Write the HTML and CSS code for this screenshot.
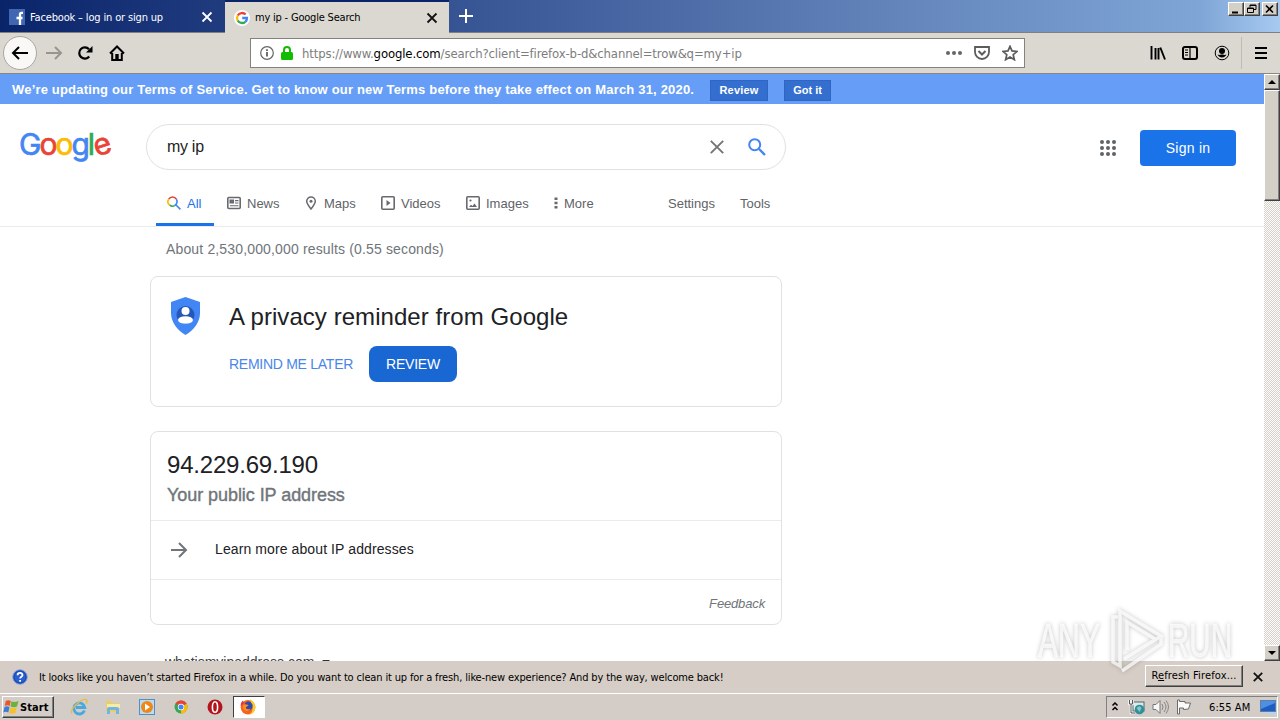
FILE: index.html
```html
<!DOCTYPE html>
<html lang="en">
<head>
    <meta charset="UTF-8">
    <meta name="viewport" content="width=device-width, initial-scale=1.0">
    <title>my ip - Google Search</title>
    <link rel="stylesheet" href="styles.css">
</head>
<body>

    <div class="titlebar">
        <div class="tab">
            <svg class="favicon" width="16" height="16" viewBox="0 0 16 16"><rect width="16" height="16" fill="#4267b2"/><path d="M14 3.800h-1.500c-1 0-1.500.5-1.500 1.500V16M7.500 9h6" fill="none" stroke="#fff" stroke-width="2.300"/></svg>
            <span class="tab-title fb-title">Facebook – log in or sign up</span>
            <svg width="12" height="12" viewBox="0 0 12 12"><path d="M1.500 1.500l9 9m0-9l-9 9" stroke="#fff" stroke-width="1.800"/></svg>
        </div>
        <div class="tab active">
            <svg class="favicon" width="16" height="16" viewBox="0 0 16 16"><circle cx="8" cy="8" r="8" fill="#fff"/><g fill="none" stroke-width="2.300"><path d="M3.700 5.500A5 5 0 0 1 11.600 4.500" stroke="#ea4335"/><path d="M3.700 5.500a5 5 0 0 0 0 5" stroke="#fbbc05"/><path d="M3.700 10.500a5 5 0 0 0 7.600 1.300" stroke="#34a853"/><path d="M11.300 11.800A5 5 0 0 0 13 8H8.200" stroke="#4285f4"/></g></svg>
            <span class="tab-title">my ip - Google Search</span>
            <svg width="12" height="12" viewBox="0 0 12 12"><path d="M1.500 1.500l9 9m0-9l-9 9" stroke="#111" stroke-width="1.800"/></svg>
        </div>
        <svg class="new-tab" width="14" height="14" viewBox="0 0 14 14"><path d="M7 0v14M0 7h14" stroke="#fff" stroke-width="2"/></svg>
        <div class="window-buttons">
            <div class="win-btn"><svg width="12" height="11" viewBox="0 0 12 11"><path d="M3 9.500h6" stroke="#000" stroke-width="2"/></svg></div>
            <div class="win-btn"><svg width="12" height="11" viewBox="0 0 12 11"><path d="M5 4.500V2h6v4.500H9M5 2.500h6M2.500 5h6v4.500h-6zM2.500 5.500h6" fill="none" stroke="#000"/></svg></div>
            <div class="win-btn close-btn"><svg width="12" height="11" viewBox="0 0 12 11"><path d="M3 2.500l7 7m0-7l-7 7" stroke="#000" stroke-width="1.600"/></svg></div>
        </div>
    </div>

    <div class="navbar">
        <div class="back"><svg width="18" height="16" viewBox="0 0 18 16"><path d="M17 8H2M8 2L2 8l6 6" fill="none" stroke="#000" stroke-width="2"/></svg></div>
        <svg class="forward" width="18" height="16" viewBox="0 0 18 16"><path d="M1 8h15M10 2l6 6-6 6" fill="none" stroke="#98958f" stroke-width="2"/></svg>
        <svg class="reload" width="16" height="16" viewBox="0 0 16 16"><path d="M12.200 11.500A5.600 5.600 0 1 1 12 4.200" fill="none" stroke="#000" stroke-width="2.200"/><path d="M15.500 1v6.500H9z"/></svg>
        <svg class="home" width="16" height="16" viewBox="0 0 16 16"><path d="M1 8.500L8 1.500l7 7M3.200 8v7h9.600V8" fill="none" stroke="#000" stroke-width="2"/><path d="M6.300 15V9h3.400v6z"/></svg>
        <div class="urlbar">
            <svg width="14" height="14" viewBox="0 0 14 14"><circle cx="7" cy="7" r="6.300" fill="none" stroke="#666" stroke-width="1.200"/><path d="M7 6v4.500M7 3.200v1.700" stroke="#555" stroke-width="1.700"/></svg>
            <svg class="lock" width="12" height="14" viewBox="0 0 12 14"><path d="M3 7V4a3 3 0 0 1 6 0v3" fill="none" stroke="#12bc00" stroke-width="2"/><rect y="6" width="12" height="8" rx="1.500" fill="#12bc00"/></svg>
            <span class="url">https://www.<b>google.com</b>/search?client=firefox-b-d&amp;channel=trow&amp;q=my+ip</span>
            <svg class="dots" width="16" height="16" viewBox="0 0 16 16" fill="#666"><circle cx="2" cy="8" r="2"/><circle cx="8" cy="8" r="2"/><circle cx="14" cy="8" r="2"/></svg>
            <svg class="pocket" width="16" height="16" viewBox="0 0 16 16" fill="none" stroke="#5c5c5c" stroke-width="1.800"><path d="M1 2h14v5a7 7 0 0 1-14 0z"/><path d="M4.500 6L8 9.500 11.500 6" stroke-width="2"/></svg>
            <svg width="16" height="16" viewBox="0 0 16 16"><path d="M8 1.300l2 4.600 5 .5-3.800 3.300 1.200 5L8 12.100l-4.400 2.600 1.200-5L1 6.400l5-.5z" fill="none" stroke="#5c5c5c" stroke-width="1.700"/></svg>
        </div>
        <div class="toolbar-icons">
            <svg width="16" height="16" viewBox="0 0 16 16"><path d="M1.500 1v13.500M5.500 3v11.500M8.500 3v11.500M10.300 2.500l4.700 12" stroke="#000" stroke-width="1.900"/></svg>
            <svg width="16" height="16" viewBox="0 0 16 16"><rect x="1" y="2" width="14" height="12" rx="2" fill="none" stroke="#000" stroke-width="2"/><path d="M8 2v12M3 5h3M3 7.500h3M3 10h3" stroke="#000" stroke-width="1.200"/></svg>
            <svg width="16" height="16" viewBox="0 0 16 16"><circle cx="8" cy="8" r="6.800" fill="none" stroke="#000" stroke-width="1"/><circle cx="8" cy="6" r="3"/><path d="M3.500 9.800c1.500 0 2.500.3 3.500-.3h2c1 .6 2 .3 3.500.3a5.200 5.200 0 0 1-9 0z"/></svg>
        </div>
        <div class="menu-sep"></div>
        <svg width="12" height="12" viewBox="0 0 12 12"><path d="M0 1h12M0 6h12M0 11h12" stroke="#000" stroke-width="2"/></svg>
    </div>

    <div class="viewport">
        <div class="page">
            <div class="banner">
                <span class="banner-text">We’re updating our Terms of Service. Get to know our new Terms before they take effect on March 31, 2020.</span>
                <span class="banner-btn review-terms">Review</span>
                <span class="banner-btn got-it">Got it</span>
            </div>

            <div class="header">
                <div class="logo"><span class="b">G</span><span class="r">o</span><span class="y">o</span><span class="b">g</span><span class="g">l</span><span class="r tilt">e</span></div>
                <div class="search-box">
                    <span class="query">my ip</span>
                    <svg class="clear" width="14" height="14" viewBox="0 0 14 14"><path d="M.8.800l12.400 12.400m0-12.400L.8 13.200" stroke="#757575" stroke-width="1.900"/></svg>
                    <svg width="18" height="18" viewBox="0 0 18 18" fill="none" stroke="#4285f4" stroke-width="2"><circle cx="6.700" cy="6.700" r="5.500"/><path d="M10.800 10.800l6.200 6.200" stroke-width="2.300"/></svg>
                </div>
                <svg class="apps" width="16" height="16" viewBox="0 0 16 16" fill="#5f6368"><circle cx="2" cy="2" r="2"/><circle cx="8" cy="2" r="2"/><circle cx="14" cy="2" r="2"/><circle cx="2" cy="8" r="2"/><circle cx="8" cy="8" r="2"/><circle cx="14" cy="8" r="2"/><circle cx="2" cy="14" r="2"/><circle cx="8" cy="14" r="2"/><circle cx="14" cy="14" r="2"/></svg>
                <div class="sign-in">Sign in</div>
            </div>

            <div class="search-tabs">
                <div class="stab all">
                    <svg width="14" height="14" viewBox="0 0 14 14" fill="none" stroke-width="1.600"><path d="M1.700 3.200a4.500 4.500 0 0 1 7.700 0" stroke="#ea4335"/><path d="M1.700 3.200a4.500 4.500 0 0 0 1 6" stroke="#fbbc05"/><path d="M2.700 9.200a4.500 4.500 0 0 0 5 .3" stroke="#34a853"/><path d="M9.400 3.200a4.500 4.500 0 0 1-1.700 6.300M8.800 8.800l4.600 4.600" stroke="#4285f4"/></svg>
                    <span>All</span>
                </div>
                <div class="stab news">
                    <svg width="14" height="14" viewBox="0 0 14 14"><rect x=".8" y="1.500" width="12.400" height="11" rx="1" fill="none" stroke="#666a6e" stroke-width="1.600"/><path d="M3 4h3.500v3H3zM8 4.600h3.500M8 7h3.500M3 9.700h8.500" fill="#666a6e" stroke="#666a6e" stroke-width="1.100"/></svg>
                    <span>News</span>
                </div>
                <div class="stab maps">
                    <svg width="12" height="14" viewBox="0 0 12 14"><path d="M6 13C3.500 9.800 1.700 7.500 1.700 5.200a4.300 4.300 0 0 1 8.600 0C10.300 7.500 8.500 9.800 6 13z" fill="none" stroke="#666a6e" stroke-width="1.500"/><circle cx="6" cy="5.200" r="1.500" fill="#666a6e"/></svg>
                    <span>Maps</span>
                </div>
                <div class="stab videos">
                    <svg width="14" height="14" viewBox="0 0 14 14"><rect x=".8" y=".8" width="12.400" height="12.400" rx="1" fill="none" stroke="#666a6e" stroke-width="1.600"/><path d="M5.500 4v6l4-3z" fill="#666a6e"/></svg>
                    <span>Videos</span>
                </div>
                <div class="stab images">
                    <svg width="14" height="14" viewBox="0 0 14 14"><rect x=".8" y=".8" width="12.400" height="12.400" rx="1" fill="none" stroke="#666a6e" stroke-width="1.600"/><path d="M3 11l2-2.300 1.500 1.300 2-2.500L11 11z" fill="#666a6e"/><circle cx="4.500" cy="4.500" r="1.100" fill="#666a6e"/></svg>
                    <span>Images</span>
                </div>
                <div class="stab more">
                    <svg width="4" height="12" viewBox="0 0 4 12" fill="#666a6e"><path d="M.5.500h3v2.500h-3zM.5 4.700h3v2.500h-3zM.5 9h3v2.500h-3z"/></svg>
                    <span>More</span>
                </div>
                <div class="stab settings">Settings</div>
                <div class="stab">Tools</div>
            </div>

            <div class="results">
                <div class="stats">About 2,530,000,000 results (0.55 seconds)</div>

                <div class="card privacy">
                    <svg width="32" height="38" viewBox="0 0 32 38"><path d="M16.500 0l14.500 5v11c0 9-6 17-14.500 22C8 33 2 25 2 16V5z" fill="#4285f4"/><circle cx="16.500" cy="18" r="9" fill="#2457b8"/><circle cx="16.500" cy="14" r="4" fill="#fff"/><ellipse cx="16.500" cy="23" rx="7.500" ry="3.800" fill="#fff"/></svg>
                    <div class="privacy-body">
                        <div class="privacy-title">A privacy reminder from Google</div>
                        <div class="privacy-actions">
                            <span class="remind">REMIND ME LATER</span>
                            <span class="review">REVIEW</span>
                        </div>
                    </div>
                </div>

                <div class="card ip-card">
                    <div class="ip-main">
                        <div class="ip">94.229.69.190</div>
                        <div class="ip-label">Your public IP address</div>
                    </div>
                    <div class="learn">
                        <svg width="18" height="16" viewBox="0 0 18 16"><path d="M1 8h15M9 1l7 7-7 7" fill="none" stroke="#70757a" stroke-width="2"/></svg>
                        <span>Learn more about IP addresses</span>
                    </div>
                    <div class="feedback">Feedback</div>
                </div>

                <div class="result-url">whatismyipaddress.com <i class="caret"></i></div>
            </div>
        </div>

        <div class="scrollbar">
            <div class="scroll-btn"><svg width="8" height="4" viewBox="0 0 8 4"><path d="M0 4l4-4 4 4z"/></svg></div>
            <div class="thumb"></div>
            <div class="track"></div>
            <div class="scroll-btn"><svg width="8" height="4" viewBox="0 0 8 4"><path d="M0 0l4 4 4-4z"/></svg></div>
        </div>
    </div>

    <div class="notification">
        <svg width="16" height="16" viewBox="0 0 16 16"><circle cx="8" cy="8" r="7.300" fill="#2a5fd0" stroke="#8aa4d8"/><circle cx="8" cy="8" r="6" fill="none" stroke="#1c46a8"/><path d="M5.600 6.300c0-3.200 4.900-3 4.900-.3 0 1.700-2.400 1.700-2.400 3.500M8.100 11v1.800" fill="none" stroke="#fff" stroke-width="1.800"/></svg>
        <span class="notification-text">It looks like you haven’t started Firefox in a while. Do you want to clean it up for a fresh, like-new experience? And by the way, welcome back!</span>
        <div class="refresh">R<u>e</u>fresh Firefox...</div>
        <svg class="dismiss" width="10" height="10" viewBox="0 0 10 10"><path d="M.8.800l8.400 8.400m0-8.400L.8 9.200" stroke="#111" stroke-width="1.800"/></svg>
    </div>

    <div class="taskbar">
        <div class="start">
            <svg width="16" height="14" viewBox="0 0 16 14"><path d="M2.800 1q2.500-1.500 5 0L6.700 6q-2.500-1.300-5 0z" fill="#e8562a"/><path d="M8.500 1.300q2.700 1.400 7-.3L14 6.500q-2.900 1.300-6.500 0z" fill="#6ab23c"/><path d="M1.500 7q2.500-1.300 5 0l-1.200 5.500q-2.400-1.400-5 0z" fill="#3c7bd8"/><path d="M7.300 7.500q2.900 1.300 6.500 0L12.400 13q-2.900 1.400-6.300 0z" fill="#f5c02c"/></svg>
            <span>Start</span>
        </div>
        <div class="quick-launch">
            <svg width="18" height="18" viewBox="0 0 18 18" fill="none"><path d="M14.500 12.500a5.500 5.500 0 1 1 .3-3H6" stroke="#4aa8e0" stroke-width="2.800"/><path d="M2 15.500C-1 11 13-1 16.500 2c1 1 .3 2.500-.5 3.500" stroke="#e5bd45" stroke-width="1.400"/></svg>
            <svg width="18" height="18" viewBox="0 0 18 18"><path d="M2 3h5l1 2h7v9H2z" fill="#e8cd6c"/><path d="M3 6h13v4H3z" fill="#f8eba8"/><path d="M3 16v-5q0-2 2-2h8q2 0 2 2v5h-3v-4H6v4z" fill="#72b5dd"/></svg>
            <svg width="18" height="18" viewBox="0 0 18 18"><rect x="1.500" y="1.500" width="15" height="15" fill="#b9dcf3" stroke="#518fc4"/><circle cx="9" cy="9" r="6" fill="#ee8618"/><path d="M7 5.500v7l5-3.500z" fill="#fff"/></svg>
            <svg width="18" height="18" viewBox="0 0 18 18"><circle cx="9" cy="9" r="6.500" fill="#34a853"/><path d="M9 9L3.300 5.800A6.500 6.500 0 0 1 14.700 5.800z" fill="#ea4335"/><path d="M9 9l5.700-3.200A6.500 6.500 0 0 1 9 15.500z" fill="#fbbc05"/><circle cx="9" cy="9" r="3.200" fill="#fff"/><circle cx="9" cy="9" r="2.500" fill="#4285f4"/></svg>
            <svg width="18" height="18" viewBox="0 0 18 18"><circle cx="9" cy="9" r="7.500" fill="#b3151c"/><ellipse cx="9" cy="9" rx="2.600" ry="5.300" fill="#b3151c" stroke="#fff" stroke-width="1.600"/></svg>
        </div>
        <div class="running">
            <svg width="18" height="18" viewBox="0 0 18 18"><circle cx="9" cy="9.300" r="7.300" fill="#f5631f"/><path d="M11 1.500c4 1.500 6.500 6 4.800 10.500-1 2.400-3 4-5.300 4.600 3-3 3.500-5 2.500-8z" fill="#ffc928"/><path d="M1.700 8C1.500 5 3 3.500 4 2.500L5 5z" fill="#e92c4c"/><circle cx="9.300" cy="8" r="4.400" fill="#2d4cb0"/><path d="M4 7c2-1.500 3-.5 5.500 0-1 2-3 1.500-2.500 3s3 1.500 4.500.5C10 14 5 13.500 4 10z" fill="#ff8a1e"/></svg>
        </div>
        <div class="tray">
            <svg class="chevrons" width="8" height="10" viewBox="0 0 8 10"><path d="M1.500 3.500L4 1l2.500 2.500M1.500 8L4 5.500 6.500 8" fill="none" stroke="#000" stroke-width="1.500"/></svg>
            <svg class="network" width="18" height="16" viewBox="0 0 18 16"><rect x="5" y="3" width="11" height="9" fill="#dceaea" stroke="#53676a"/><path d="M1.500 1v4h3V1M3 5v9h4" fill="none" stroke="#fff" stroke-width="2.400"/><path d="M1.500 1v4h3V1M3 5v9h4" fill="none" stroke="#555"/><circle cx="11.500" cy="10.500" r="4.800" fill="#328f9d"/><path d="M8.500 9l3-2 2 2-2 4z" fill="#85cbbb"/></svg>
            <svg class="volume" width="17" height="16" viewBox="0 0 17 16"><path d="M1 5.500h3L8 1.500v13l-4-4H1z" fill="#f8f8f8" stroke="#777"/><path d="M10 5q2 3 0 6M12 3q4 5 0 10M14 1.500q5 6.500 0 13" fill="none" stroke="#878787"/></svg>
            <svg class="flag" width="16" height="16" viewBox="0 0 16 16"><path d="M1.500 1v14h2V9h4v1.500l5-.5 2-6H9V2.500H3.500V1z" fill="#fafafa" stroke="#6b6b6b"/></svg>
            <span class="clock">6:55 AM</span>
            <svg width="17" height="14" viewBox="0 0 17 14"><rect x=".5" y=".5" width="15" height="11" fill="#1d5dc1" stroke="#5b7fa8"/><path d="M1 1h14v2L1 9z" fill="#4e8fe4"/><path d="M7 13h9" stroke="#b8d2ef" stroke-width="2"/></svg>
        </div>
    </div>

    <!-- sandbox watermark -->
    <svg class="watermark" width="220" height="80" viewBox="0 0 220 80">
        <text x="8" y="57" textLength="62" lengthAdjust="spacingAndGlyphs">ANY</text>
        <path d="M88 17h-5v45l7 4V11l41 25-37 23M97 50V22l28 17M92 71l39-27V36"/>
        <text x="138" y="57" textLength="64" lengthAdjust="spacingAndGlyphs">RUN</text>
    </svg>

</body>
</html>
```
FILE: styles.css
```css
* {
    box-sizing: border-box;
}
body {
    margin: 0;
    width: 1280px;
    height: 720px;
    overflow: hidden;
    display: flex;
    flex-direction: column;
    font-family: "Liberation Sans", Arial, sans-serif;
    background: #fff;
}
svg {
    display: block;
    flex: none;
}
span, div {
    white-space: nowrap;
}

/* window chrome */
.titlebar, .navbar, .notification, .taskbar {
    font-family: "DejaVu Sans Condensed", "DejaVu Sans", Tahoma, sans-serif;
    font-size: 11px;
    color: #000;
    flex: none;
}
.titlebar {
    height: 33px;
    display: flex;
    background: linear-gradient(to right, #0a246a 0, #3b5897 500px, #6587bd 920px, #7fa5d6 1200px, #a6caf0 1280px);
    border-bottom: 1px solid #808080;
}
.tab {
    width: 225px;
    height: 32px;
    display: flex;
    align-items: center;
    padding: 2px 12px 0 9px;
    color: #fff;
}
.tab.active {
    width: 224px;
    height: 33px;
    background: #dbd8d1;
    color: #000;
    border-top: 2px solid #0a246a;
    padding: 0 11px 0 9px;
}
.favicon {
    margin-right: 5px;
}
.tab-title {
    flex: 1;
    letter-spacing: -0.2px;
}
.fb-title {
    letter-spacing: -0.16px;
}
.new-tab {
    margin: 9px 0 0 10px;
}
.window-buttons {
    display: flex;
    margin: 2px 2px 0 auto;
}
.win-btn {
    width: 16px;
    height: 14px;
    background: #d4d0c8;
    border: 1px solid;
    border-color: #fff #404040 #404040 #fff;
    box-shadow: inset -1px -1px 0 #808080;
}
.close-btn {
    margin-left: 2px;
}
.navbar {
    height: 41px;
    display: flex;
    align-items: center;
    padding: 0 13px 0 3px;
    background: #dbd8d1;
    border-bottom: 1px solid #8a8782;
}
.back {
    width: 34px;
    height: 34px;
    border: 1px solid #aaa7a2;
    border-radius: 50%;
    background: #f9f8f7;
    display: flex;
    align-items: center;
    justify-content: center;
}
.forward {
    margin-left: 8px;
}
.reload {
    margin-left: 14px;
}
.home {
    margin-left: 16px;
}
.urlbar {
    width: 775px;
    height: 30px;
    margin-left: 125px;
    padding: 0 6px 0 9px;
    background: #fff;
    border: 1px solid #85827d;
    display: flex;
    align-items: center;
}
.lock {
    margin-left: 7px;
}
.url {
    margin-left: 9px;
    flex: 1;
    font-size: 13px;
    color: #7d7d7d;
    letter-spacing: -0.13px;
}
.url b {
    font-weight: normal;
    color: #000;
}
.pocket {
    margin: 0 12px;
}
.toolbar-icons {
    display: flex;
    gap: 16px;
    margin-left: auto;
}
.menu-sep {
    width: 1px;
    height: 32px;
    margin: 0 13px 0 11px;
    background: #bfbcb6;
}

/* page */
.viewport {
    height: 587px;
    display: flex;
    flex: none;
    overflow: hidden;
}
.page {
    width: 1264px;
    overflow: hidden;
}
.banner {
    height: 30px;
    background: #669df6;
    color: #fff;
    font-size: 13px;
    font-weight: bold;
    display: flex;
    align-items: center;
    padding: 1px 0 0 12px;
}
.banner-text {
    width: 698px;
    letter-spacing: 0.18px;
}
.banner-btn {
    height: 21px;
    line-height: 19px;
    margin-top: 1px;
    font-size: 11px;
    text-align: center;
    background: #346fd0;
    border: 1px solid #2f66c2;
}
.review-terms {
    width: 58px;
    letter-spacing: 0.2px;
}
.got-it {
    width: 47px;
    margin-left: 16px;
}
.header {
    display: flex;
    align-items: center;
    height: 66px;
    padding: 20px 28px 0 19px;
}
.logo {
    width: 127px;
    margin-top: -6px;
    font-family: Inter, sans-serif;
    font-size: 30px;
    letter-spacing: -2px;
    line-height: 40px;
    -webkit-text-stroke: 0.7px;
}
.b { color: #4285f4; }
.r { color: #ea4335; }
.y { color: #fbbc05; }
.g { color: #34a853; }
.tilt {
    display: inline-block;
    transform: rotate(-18deg);
}
.search-box {
    width: 640px;
    height: 46px;
    border: 1px solid #dfe1e5;
    border-radius: 23px;
    display: flex;
    align-items: center;
    padding: 0 19px 0 20px;
    font-size: 16px;
    color: #222;
}
.query {
    flex: 1;
    letter-spacing: -0.3px;
}
.clear {
    margin-right: 24px;
}
.apps {
    margin: 2px 24px 0 314px;
}
.sign-in {
    width: 96px;
    height: 36px;
    line-height: 36px;
    margin-top: 2px;
    border-radius: 4px;
    background: #1a73e8;
    color: #fff;
    font-size: 14px;
    letter-spacing: 0.25px;
    text-align: center;
}
.search-tabs {
    height: 57px;
    display: flex;
    align-items: flex-end;
    padding-left: 156px;
    border-bottom: 1px solid #ebebeb;
}
.stab {
    display: flex;
    align-items: center;
    gap: 6px;
    height: 46px;
    font-size: 13px;
    color: #5f6368;
}
.all {
    width: 58px;
    padding: 3px 0 0 11px;
    color: #1a73e8;
    border-bottom: 3px solid #1a73e8;
}
.news {
    width: 78px;
    margin-left: 13px;
}
.maps {
    width: 76px;
    gap: 7px;
}
.videos {
    width: 85px;
}
.images {
    width: 88px;
}
.more {
    width: 114px;
}
.settings {
    width: 72px;
}
.results {
    padding-left: 150px;
}
.stats {
    padding: 13px 0 0 16px;
    height: 49px;
    line-height: 18px;
    font-size: 14px;
    letter-spacing: 0.15px;
    color: #70757a;
}
.card {
    width: 632px;
    border: 1px solid #dfe1e5;
    border-radius: 8px;
}
.privacy {
    height: 131px;
    display: flex;
    padding: 20px 0 0 18px;
}
.privacy-body {
    margin-left: 28px;
}
.privacy-title {
    font-size: 24px;
    line-height: 28px;
    margin-top: 6px;
    color: #202124;
    letter-spacing: 0.06px;
}
.privacy-actions {
    display: flex;
    align-items: center;
    margin-top: 15px;
    font-size: 14px;
}
.remind {
    width: 140px;
    color: #4a86e8;
    letter-spacing: -0.27px;
}
.review {
    width: 88px;
    height: 36px;
    line-height: 36px;
    border-radius: 8px;
    background: #1967d2;
    color: #fff;
    text-align: center;
    letter-spacing: -0.2px;
}
.ip-card {
    height: 194px;
    margin-top: 24px;
}
.ip-main {
    height: 88px;
    padding: 19px 0 0 16px;
}
.ip {
    font-size: 24px;
    line-height: 28px;
    color: #202124;
    letter-spacing: -0.2px;
}
.ip-label {
    font-size: 18px;
    line-height: 24px;
    margin-top: 4px;
    color: #70757a;
    letter-spacing: -0.06px;
    -webkit-text-stroke: 0.4px;
}
.learn {
    height: 60px;
    border-top: 1px solid #ebebeb;
    border-bottom: 1px solid #ebebeb;
    display: flex;
    align-items: center;
    gap: 27px;
    padding-left: 19px;
    font-size: 14px;
    letter-spacing: 0.1px;
    color: #202124;
}
.learn span {
    padding-bottom: 2px;
}
.feedback {
    height: 44px;
    line-height: 47px;
    padding-right: 16px;
    text-align: right;
    font-size: 13px;
    font-style: italic;
    letter-spacing: -0.15px;
    color: #70757a;
}
.result-url {
    margin: 28px 0 0 15px;
    font-size: 14px;
    line-height: 18px;
    color: #3c4043;
}
.caret {
    display: inline-block;
    vertical-align: 3px;
    margin-left: 4px;
    border: 4px solid transparent;
    border-top-color: #333;
    border-bottom: 0;
}

/* scrollbar */
.scrollbar {
    width: 16px;
    display: flex;
    flex-direction: column;
}
.scroll-btn {
    height: 16px;
    flex: none;
    display: flex;
    align-items: center;
    justify-content: center;
}
.scroll-btn, .thumb {
    background: #d4d0c8;
    border: 1px solid;
    border-color: #fff #404040 #404040 #fff;
    box-shadow: inset -1px -1px 0 #808080;
}
.thumb {
    height: 111px;
    flex: none;
}
.track {
    flex: 1;
    background: repeating-conic-gradient(#fff 0 25%, #d4d0c8 0 50%) 0 0 / 2px 2px;
}

/* bottom bars */
.notification {
    height: 32px;
    background: #d6cec6;
    display: flex;
    align-items: center;
    padding: 0 17px 0 12px;
}
.notification-text {
    margin-left: 11px;
    flex: 1;
    letter-spacing: -0.145px;
}
.refresh {
    width: 98px;
    height: 22px;
    line-height: 19px;
    margin-top: -2px;
    text-align: center;
    border: 1px solid;
    border-color: #fff #404040 #404040 #fff;
    box-shadow: inset -1px -1px 0 #808080;
    letter-spacing: 0.15px;
}
.dismiss {
    margin-left: 10px;
}
.taskbar {
    height: 27px;
    background: #d4cdc7;
    border-top: 1px solid #fff;
    display: flex;
    align-items: center;
    padding: 0 2px;
}
.start {
    width: 52px;
    height: 22px;
    display: flex;
    align-items: center;
    gap: 1px;
    border: 1px solid;
    border-color: #fff #404040 #404040 #fff;
    box-shadow: inset -1px -1px 0 #808080;
    font-weight: bold;
    letter-spacing: 0.1px;
}
.quick-launch {
    display: flex;
    gap: 16px;
    margin-left: 16px;
}
.running {
    width: 32px;
    height: 22px;
    margin-left: 9px;
    padding: 1px 5px;
    background: #fff;
    border: 1px solid;
    border-color: #404040 #fff #fff #404040;
}
.tray {
    width: 172px;
    height: 22px;
    margin-left: auto;
    display: flex;
    align-items: center;
    border: 1px solid;
    border-color: #808080 #fff #fff #808080;
    padding-left: 4px;
}
.network {
    margin-left: 9px;
}
.volume {
    margin-left: 6px;
}
.flag {
    margin-left: 7px;
}
.clock {
    width: 51px;
    margin-left: 17px;
    letter-spacing: 0.1px;
}
.watermark {
    position: absolute;
    left: 1030px;
    top: 600px;
    font: 49px "Liberation Sans", sans-serif;
    fill: rgba(255, 255, 255, 0.75);
    stroke: rgba(255, 255, 255, 0.5);
    filter: drop-shadow(0 0 2px rgba(0, 0, 0, 0.3));
}
.watermark path {
    fill: none;
    stroke: rgba(255, 255, 255, 0.75);
    stroke-width: 3.500;
}
```
